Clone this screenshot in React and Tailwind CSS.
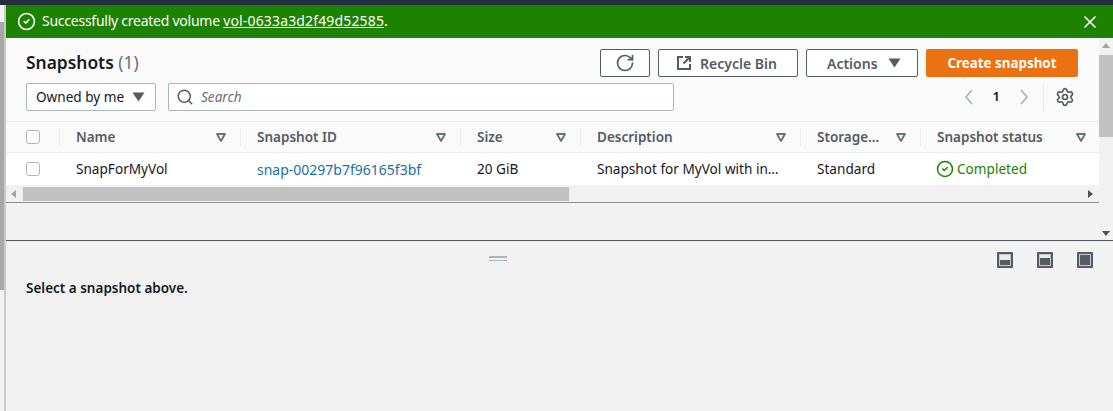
import React from "react";
import { Search, X, Settings, RotateCw, CircleCheck } from "lucide-react";

const font = "font-['Noto_Sans','Open_Sans',sans-serif]";

function Caret() {
  return (
    <svg width="10" height="9" viewBox="0 0 10 9" className="shrink-0">
      <path d="M1 1 H9 L5 8 Z" fill="none" stroke="#687078" strokeWidth="1.8" strokeLinejoin="round" />
    </svg>
  );
}

function Solid() {
  return (
    <svg width="13" height="10" viewBox="0 0 13 10" className="shrink-0">
      <path d="M0.5 0.5 H12.5 L6.5 9.5 Z" fill="#545b64" />
    </svg>
  );
}

function External() {
  return (
    <svg width="16" height="16" viewBox="0 0 16 16" fill="none" stroke="#545b64" strokeWidth="2" className="shrink-0">
      <path d="M7 2 H2 V14 H14 V9" />
      <path d="M9 2 H14 V7 M14 2 L7.5 8.5" />
    </svg>
  );
}

function Chevron({ d }) {
  return (
    <svg width="10" height="16" viewBox="0 0 10 16" fill="none" stroke="#aab7b8" strokeWidth="1.8" className="shrink-0">
      <path d={d} />
    </svg>
  );
}

function HeadCell({ w, label }) {
  return (
    <div className={`${w} shrink-0 h-full flex items-center pl-4 pr-[14px] justify-between`}>
      <span className="text-[13.5px] font-semibold text-[#545b64]">{label}</span>
      <Caret />
    </div>
  );
}

function Sep() {
  return <div className="w-px h-[18px] bg-[#eaeded] shrink-0" />;
}

function Cb() {
  return <div className="w-[14px] h-[14px] rounded-[3px] border border-[#aab7b8] bg-white" />;
}

function PanelIcon({ y, h }) {
  return (
    <svg width="16" height="16" viewBox="0 0 16 16">
      <rect x="0" y="0" width="16" height="16" rx="1" fill="#545b64" />
      <rect x="2.5" y="2.5" width="11" height="11" fill="#eaeded" stroke="#c4c8cc" />
      <rect x="3" y={y} width="10" height={h} fill="#545b64" />
    </svg>
  );
}

export default function App() {
  return (
    <div className={`${font} w-[1113px] h-[411px] overflow-hidden flex flex-col bg-[#f2f2f3] text-[13.6px] text-[#16191f]`}>
      <div className="h-[5px] bg-[#232f3e] shrink-0" />
      <div className="flex-1 flex min-h-0">
        <div className="w-[6px] shrink-0 bg-[#f2f2f3] border-r-2 border-[#c8c9c9]">
          <div className="w-1 h-[17px] bg-[#f2f2f3]" />
          <div className="w-1 h-[268px] bg-[#a8a8a8]" />
        </div>
        <div className="flex-1 flex flex-col min-w-0">
          <div className="h-[33px] shrink-0 bg-[#1d8102] flex items-center pl-[11px] pr-[13px] text-white">
            <CircleCheck size={19} strokeWidth={2} className="shrink-0" />
            <span className="ml-[6px] text-[14px] tracking-[-0.25px] pb-[2px]">
              Successfully created volume <span className="underline tracking-[0.15px]">vol-0633a3d2f49d52585</span>.
            </span>
            <X size={20} strokeWidth={2} className="ml-auto" />
          </div>

          <div className="h-[203px] shrink-0 flex border-b border-[#55585c]">
            <div className="flex-1 min-w-0 flex flex-col">
              <div className="bg-[#fafafa] h-[83px] shrink-0 pl-5 pr-[21px] pt-[11px]">
                <div className="flex items-center h-[28px]">
                  <h1 className="text-[17.4px] font-semibold leading-none">
                    Snapshots <span className="font-normal text-[#687078]">(1)</span>
                  </h1>
                  <div className="ml-auto flex gap-2 h-[28px] text-[#545b64] font-semibold">
                    <button className="w-[50px] border border-[#545b64] rounded-[2px] bg-white flex items-center justify-center">
                      <RotateCw size={20} strokeWidth={2} />
                    </button>
                    <button className="w-[140px] border border-[#545b64] rounded-[2px] bg-white flex items-center pl-[17px] gap-2">
                      <External />
                      <span className="text-[14px]">Recycle Bin</span>
                    </button>
                    <button className="w-[112px] border border-[#545b64] rounded-[2px] bg-white flex items-center pl-5 gap-[10px]">
                      <span className="text-[14px]">Actions</span>
                      <Solid />
                    </button>
                    <button className="w-[152px] rounded-[2px] bg-[#ec7211] text-white font-bold text-[13.4px] flex items-center justify-center">
                      Create snapshot
                    </button>
                  </div>
                </div>
                <div className="flex items-center h-[28px] mt-[6px]">
                  <div className="w-[130px] h-full border border-[#aab7b8] rounded-[2px] bg-white flex items-center pl-[9px] pr-[10px] justify-between">
                    <span>Owned by me</span>
                    <Solid />
                  </div>
                  <div className="w-[506px] h-full ml-3 border border-[#aab7b8] rounded-[2px] bg-white flex items-center pl-[7px] gap-[7px]">
                    <Search size={18} strokeWidth={2} className="text-[#545b64]" />
                    <span className="italic text-[#687078]">Search</span>
                  </div>
                  <div className="ml-auto flex items-center h-full">
                    <Chevron d="M8 1 L2 8 L8 15" />
                    <span className="mx-[19px] font-semibold text-[13px]">1</span>
                    <Chevron d="M2 1 L8 8 L2 15" />
                    <div className="w-px h-[28px] bg-[#eaeded] ml-[14px]" />
                    <Settings size={20} strokeWidth={2} className="text-[#545b64] ml-[11px] mr-[3px]" />
                  </div>
                </div>
              </div>

              <div className="h-[32px] shrink-0 bg-[#fafafa] border-y border-[#eaeded] flex items-center overflow-hidden">
                <div className="w-[53px] shrink-0 flex items-center pl-5"><Cb /></div>
                <Sep />
                <HeadCell w="w-[180px]" label="Name" />
                <Sep />
                <HeadCell w="w-[219px]" label="Snapshot ID" />
                <Sep />
                <HeadCell w="w-[119px]" label="Size" />
                <Sep />
                <HeadCell w="w-[219px]" label="Description" />
                <Sep />
                <HeadCell w="w-[119px]" label="Storage..." />
                <Sep />
                <HeadCell w="w-[179px]" label="Snapshot status" />
              </div>

              <div className="h-[32px] shrink-0 bg-white flex items-center overflow-hidden">
                <div className="w-[54px] shrink-0 flex items-center pl-5"><Cb /></div>
                <div className="w-[181px] shrink-0 pl-4">SnapForMyVol</div>
                <div className="w-[220px] shrink-0 pl-4 text-[14px] text-[#1a6fa8]">snap-00297b7f96165f3bf</div>
                <div className="w-[120px] shrink-0 pl-4">20 GiB</div>
                <div className="w-[220px] shrink-0 pl-4 whitespace-nowrap">Snapshot for MyVol with in…</div>
                <div className="w-[120px] shrink-0 pl-4">Standard</div>
                <div className="pl-[15px] flex items-center gap-[3px] text-[#1d8102]">
                  <CircleCheck size={18} strokeWidth={2} />
                  <span>Completed</span>
                </div>
              </div>

              <div className="h-[18px] shrink-0 bg-[#f1f1f1] flex items-center border-b border-[#8d9194]">
                <svg width="6" height="8" viewBox="0 0 6 8" className="ml-[5px] shrink-0"><path d="M5 0 L0 4 L5 8 Z" fill="#a3a3a3" /></svg>
                <div className="h-[14px] w-[546px] ml-[6px] bg-[#c1c1c1]" />
                <svg width="6" height="8" viewBox="0 0 6 8" className="ml-auto mr-[6px] shrink-0"><path d="M1 0 L6 4 L1 8 Z" fill="#505050" /></svg>
              </div>
              <div className="flex-1 bg-[#f2f2f3]" />
            </div>

            <div className="w-[14px] shrink-0 bg-[#f1f1f1] flex flex-col items-center">
              <svg width="8" height="6" viewBox="0 0 8 6" className="mt-[5px] shrink-0"><path d="M0 5 L4 0 L8 5 Z" fill="#a3a3a3" /></svg>
              <div className="w-full h-[82px] mt-[6px] bg-[#c1c1c1]" />
              <svg width="8" height="6" viewBox="0 0 8 6" className="mt-auto mb-[4px] shrink-0"><path d="M0 1 L4 6 L8 1 Z" fill="#505050" /></svg>
            </div>
          </div>

          <div className="flex-1 px-5 relative">
            <div className="flex flex-col gap-[2px] w-[18px] mt-[15px] ml-[463px]">
              <div className="h-[1.5px] bg-[#aab7b8]" />
              <div className="h-[1.5px] bg-[#aab7b8]" />
            </div>
            <div className="absolute right-[20px] top-[11px] flex gap-[24px]">
              <PanelIcon y={8} h={5} />
              <PanelIcon y={6} h={7} />
              <PanelIcon y={3} h={10} />
            </div>
            <p className="mt-[17px] text-[13.5px] font-semibold">Select a snapshot above.</p>
          </div>
        </div>
      </div>
    </div>
  );
}
